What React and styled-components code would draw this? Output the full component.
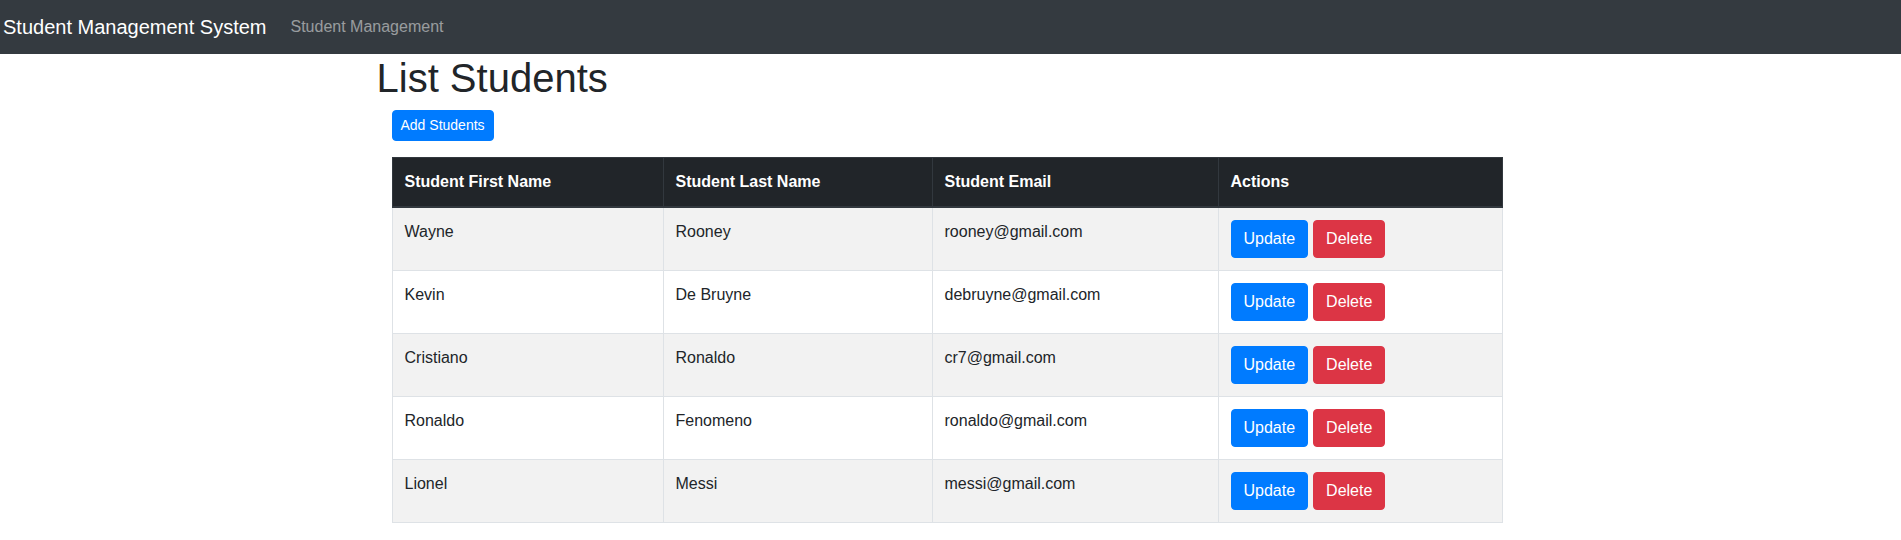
import React from "react";
import styled, { createGlobalStyle } from "styled-components";

const GlobalStyle = createGlobalStyle`
  body {
    margin: 0;
    font-family: "Liberation Sans", Arial, sans-serif;
    font-size: 16px;
    line-height: 1.5;
    color: #212529;
    background: #fff;
  }
  * {
    box-sizing: border-box;
  }
`;

const Navbar = styled.nav`
  display: flex;
  align-items: center;
  height: 54px;
  padding: 0 3px;
  background-color: #343a40;
`;

const Brand = styled.a`
  font-size: 20px;
  line-height: 30px;
  color: #fff;
  margin-right: 16px;
  text-decoration: none;
  white-space: nowrap;
`;

const NavLink = styled.a`
  padding: 0 8px;
  line-height: 24px;
  color: rgba(255, 255, 255, 0.5);
  text-decoration: none;
`;

const Container = styled.div`
  width: 1140px;
  margin: 0 0 0 calc(50% - 574px);
`;

const Title = styled.h1`
  margin: 0 0 8px;
  font-size: 40px;
  font-weight: 500;
  line-height: 1.2;
`;

const Body = styled.div`
  padding: 0 15px;
`;

const Toolbar = styled.div`
  display: flex;
  margin-bottom: 16px;
`;

const colors = {
  primary: "#007bff",
  danger: "#dc3545",
};

const Button = styled.button`
  display: inline-block;
  font-family: inherit;
  font-size: ${(p) => (p.small ? "14px" : "16px")};
  line-height: 1.5;
  padding: ${(p) => (p.small ? "4px 8px" : "6px 12px")};
  border: 1px solid ${(p) => colors[p.variant]};
  border-radius: 4px;
  background-color: ${(p) => colors[p.variant]};
  color: #fff;
  cursor: pointer;
`;

const Table = styled.table`
  width: 1110px;
  table-layout: fixed;
  border-collapse: collapse;
  margin-bottom: 16px;
`;

const Th = styled.th`
  padding: 12px;
  text-align: left;
  font-weight: 700;
  color: #fff;
  background-color: #212529;
  border: 1px solid #32383e;
  border-bottom-width: 2px;
  vertical-align: bottom;
`;

const Row = styled.tr`
  background-color: ${(p) => (p.striped ? "rgba(0, 0, 0, 0.05)" : "transparent")};
`;

const Td = styled.td`
  padding: 12px;
  border: 1px solid #dee2e6;
  vertical-align: top;
`;

const ActionGroup = styled.div`
  display: flex;
  gap: 5px;
`;

const students = [
  { id: 1, firstName: "Wayne", lastName: "Rooney", email: "rooney@gmail.com" },
  { id: 2, firstName: "Kevin", lastName: "De Bruyne", email: "debruyne@gmail.com" },
  { id: 3, firstName: "Cristiano", lastName: "Ronaldo", email: "cr7@gmail.com" },
  { id: 4, firstName: "Ronaldo", lastName: "Fenomeno", email: "ronaldo@gmail.com" },
  { id: 5, firstName: "Lionel", lastName: "Messi", email: "messi@gmail.com" },
];

const App = () => {
  return (
    <>
      <GlobalStyle />
      <Navbar>
        <Brand href="#">Student Management System</Brand>
        <NavLink href="#">Student Management</NavLink>
      </Navbar>
      <Container>
        <Title>List Students</Title>
        <Body>
          <Toolbar>
            <Button variant="primary" small>Add Students</Button>
          </Toolbar>
          <Table>
            <colgroup>
              <col style={{ width: 271 }} />
              <col style={{ width: 269 }} />
              <col style={{ width: 286 }} />
              <col style={{ width: 284 }} />
            </colgroup>
            <thead>
              <tr>
                <Th>Student First Name</Th>
                <Th>Student Last Name</Th>
                <Th>Student Email</Th>
                <Th>Actions</Th>
              </tr>
            </thead>
            <tbody>
              {students.map((s, i) => (
                <Row key={s.id} striped={i % 2 === 0}>
                  <Td>{s.firstName}</Td>
                  <Td>{s.lastName}</Td>
                  <Td>{s.email}</Td>
                  <Td>
                    <ActionGroup>
                      <Button variant="primary">Update</Button>
                      <Button variant="danger">Delete</Button>
                    </ActionGroup>
                  </Td>
                </Row>
              ))}
            </tbody>
          </Table>
        </Body>
      </Container>
    </>
  );
};

export default App;
